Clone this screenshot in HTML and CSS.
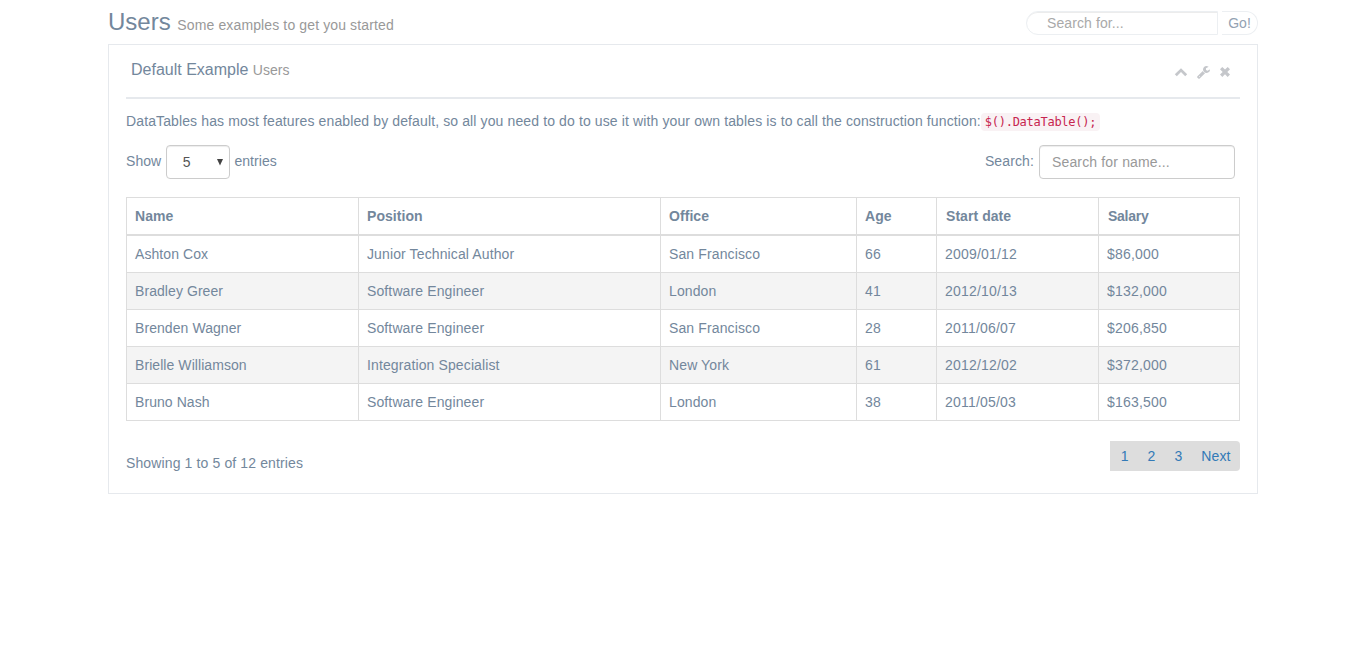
FILE: index.html
```html
<!DOCTYPE html>
<html lang="en">
<head>
<meta charset="utf-8">
<title>Users</title>
<link rel="stylesheet" href="styles.css">
</head>
<body>
<main class="page">
  <header class="page-title">
    <h3 class="title">Users <small class="title-note">Some examples to get you started</small></h3>
    <form class="top-search">
      <input class="top-input" type="text" placeholder="Search for..." aria-label="Search">
      <button class="go" type="button">Go!</button>
    </form>
  </header>
  <section class="panel">
    <div class="panel-head">
      <h2 class="panel-title">Default Example <small class="panel-note">Users</small></h2>
      <div class="tools">
        <svg class="icon" width="14" height="14" viewBox="0 0 14 14"><path d="M7 3.200 13.200 9.200 11.200 11.200 7 7.100 2.800 11.200.8 9.200Z"/></svg>
        <svg class="icon wrench" width="13" height="14" viewBox="0 0 1664 1792"><path d="M384 1472q0-26-19-45t-45-19-45 19-19 45 19 45 45 19 45-19 19-45zm644-420l-682 682q-37 37-90 37-52 0-91-37L59 1626q-38-36-38-90 0-53 38-91l681-681q39 98 114.500 173.500T1028 1052zm634-435q0 39-23 106-47 134-164.500 217.500T1216 1024q-185 0-316.500-131.500T768 576t131.500-316.500T1216 128q58 0 121.500 16.500T1445 191q16 11 16 28t-16 28l-293 169v224l193 107q5-3 79-48.500t135.500-81T1630 582q15 0 23.500 10t8.500 25z"/></svg>
        <svg class="icon" width="14" height="14" viewBox="0 0 14 14"><path d="M4.300 2 7 4.600 9.700 2 12 4.200 9.300 6.900 12 9.600 9.700 11.900 7 9.200 4.300 11.900 2 9.600 4.700 6.900 2 4.200Z"/></svg>
      </div>
    </div>
    <p class="intro">DataTables has most features enabled by default, so all you need to do to use it with your own tables is to call the construction function:<code class="code">$().DataTable();</code></p>
    <div class="controls">
      <div class="length"><span>Show</span><div class="select"><span>5</span><svg width="6" height="7" viewBox="0 0 6 7"><path d="M0 0H6L3 6.500Z"/></svg></div><span>entries</span></div>
      <label class="filter"><span>Search:</span><input class="filter-input" type="text" placeholder="Search for name..."></label>
    </div>
    <table class="table">
      <colgroup><col class="c-name"><col class="c-position"><col class="c-office"><col class="c-age"><col class="c-date"><col class="c-salary"></colgroup>
      <thead><tr><th>Name</th><th>Position</th><th>Office</th><th>Age</th><th>Start date</th><th>Salary</th></tr></thead>
      <tbody>
        <tr><td>Ashton Cox</td><td>Junior Technical Author</td><td>San Francisco</td><td>66</td><td>2009/01/12</td><td>$86,000</td></tr>
        <tr><td>Bradley Greer</td><td>Software Engineer</td><td>London</td><td>41</td><td>2012/10/13</td><td>$132,000</td></tr>
        <tr><td>Brenden Wagner</td><td>Software Engineer</td><td>San Francisco</td><td>28</td><td>2011/06/07</td><td>$206,850</td></tr>
        <tr><td>Brielle Williamson</td><td>Integration Specialist</td><td>New York</td><td>61</td><td>2012/12/02</td><td>$372,000</td></tr>
        <tr><td>Bruno Nash</td><td>Software Engineer</td><td>London</td><td>38</td><td>2011/05/03</td><td>$163,500</td></tr>
      </tbody>
    </table>
    <footer class="foot">
      <div class="info">Showing 1 to 5 of 12 entries</div>
      <nav class="pager"><a>1</a><a>2</a><a>3</a><a>Next</a></nav>
    </footer>
  </section>
</main>
</body>
</html>
```

FILE: styles.css
```css
* { box-sizing: border-box; }
body {
  margin: 0;
  background: #fff;
  color: #73879c;
  font: 14px/20px "Liberation Sans", Arial, sans-serif;
}
input, button { font: inherit; outline: 0; }
.page { width: 1150px; margin: 0 auto; }
.page-title {
  display: flex;
  justify-content: space-between;
  height: 44px;
  padding-top: 9px;
}
.title { margin: 0; font-size: 24px; line-height: 26px; font-weight: 400; }
.title-note { font-size: 14px; color: #999; letter-spacing: .125px; }
.top-search { display: flex; gap: 4px; padding-top: 2px; height: 26px; }
.top-input {
  width: 192px;
  height: 24px;
  padding: 0 20px;
  border: 1px solid #eceff2;
  border-radius: 25px 0 0 25px;
  box-shadow: inset 0 1px 0 rgba(0, 0, 0, .075);
  color: #93a2b2;
  letter-spacing: .1px;
}
.top-input::placeholder { color: #a9a9a9; opacity: 1; }
.go {
  width: 36px;
  height: 24px;
  padding: 0 6px;
  border: 1px solid #eceff2;
  border-left: 0;
  border-radius: 0 25px 25px 0;
  background: #fff;
  color: #93a2b2;
  line-height: 20px;
}
.panel { height: 450px; padding: 9px 17px 0; border: 1px solid #e6e9ed; }
.panel-head {
  display: flex;
  justify-content: space-between;
  height: 45px;
  padding: 5px 8px 0 5px;
  border-bottom: 2px solid #e6e9ed;
}
.panel-title { margin: 0; font-size: 16px; line-height: 22px; font-weight: 400; }
.panel-note { font-size: 14px; color: #999; }
.tools { display: flex; gap: 8px; padding-top: 6px; }
.icon { fill: #c5c7cb; }
.wrench { margin-left: 1px; }
.intro { margin: 12px 0 0; white-space: nowrap; letter-spacing: .12px; }
.code {
  padding: 2px 4px;
  border-radius: 4px;
  background: #f9f2f4;
  color: #c7254e;
  font: 12px "DejaVu Sans Mono", monospace;
  letter-spacing: -.27px;
}
.controls { display: flex; justify-content: space-between; padding: 14px 5px 0 0; }
.length, .filter { display: flex; gap: 5px; line-height: 32px; letter-spacing: .12px; }
.length { gap: 4.600px; letter-spacing: .05px; }
.select {
  display: flex;
  align-items: center;
  justify-content: space-between;
  width: 64px;
  height: 34px;
  padding: 0 6px 0 16px;
  border: 1px solid #ccc;
  border-radius: 4px;
  box-shadow: inset 0 1px 1px rgba(0, 0, 0, .075);
  color: #555;
}
.select svg { fill: #444; }
.filter-input {
  width: 196px;
  height: 34px;
  padding: 6px 12px;
  border: 1px solid #ccc;
  border-radius: 4px;
  box-shadow: inset 0 1px 1px rgba(0, 0, 0, .075);
  letter-spacing: .15px;
}
.filter-input::placeholder { color: #999; opacity: 1; }
.table {
  width: 1114px;
  margin-top: 18px;
  table-layout: fixed;
  border-spacing: 0;
  border: solid #ddd;
  border-width: 1px 0 0 1px;
}
.c-name { width: 232px; }
.c-position { width: 302px; }
.c-office { width: 196px; }
.c-age { width: 80px; }
.c-date { width: 162px; }
.c-salary { width: 141px; }
.table th, .table td {
  height: 37px;
  padding: 0 8px;
  border: solid #ddd;
  border-width: 0 1px 1px 0;
  text-align: left;
}
.table td { letter-spacing: .12px; }
.table td:first-child { letter-spacing: .07px; }
.table td:nth-child(n+5) { letter-spacing: .2px; }
.table th { height: 38px; border-bottom-width: 2px; letter-spacing: .06px; }
.table th:nth-child(n+5) { padding-left: 9px; }
.table th:last-child { letter-spacing: -.25px; }
.table tbody tr:nth-child(even) { background: #f4f4f4; }
.foot { display: flex; justify-content: space-between; padding-top: 20px; }
.info { padding-top: 12px; letter-spacing: .125px; }
.pager {
  display: flex;
  gap: 19px;
  height: 30px;
  padding: 0 9.500px 0 10.500px;
  border-radius: 0 4px 4px 0;
  background: #ddd;
  color: #337ab7;
  line-height: 30px;
  letter-spacing: .1px;
}
```
